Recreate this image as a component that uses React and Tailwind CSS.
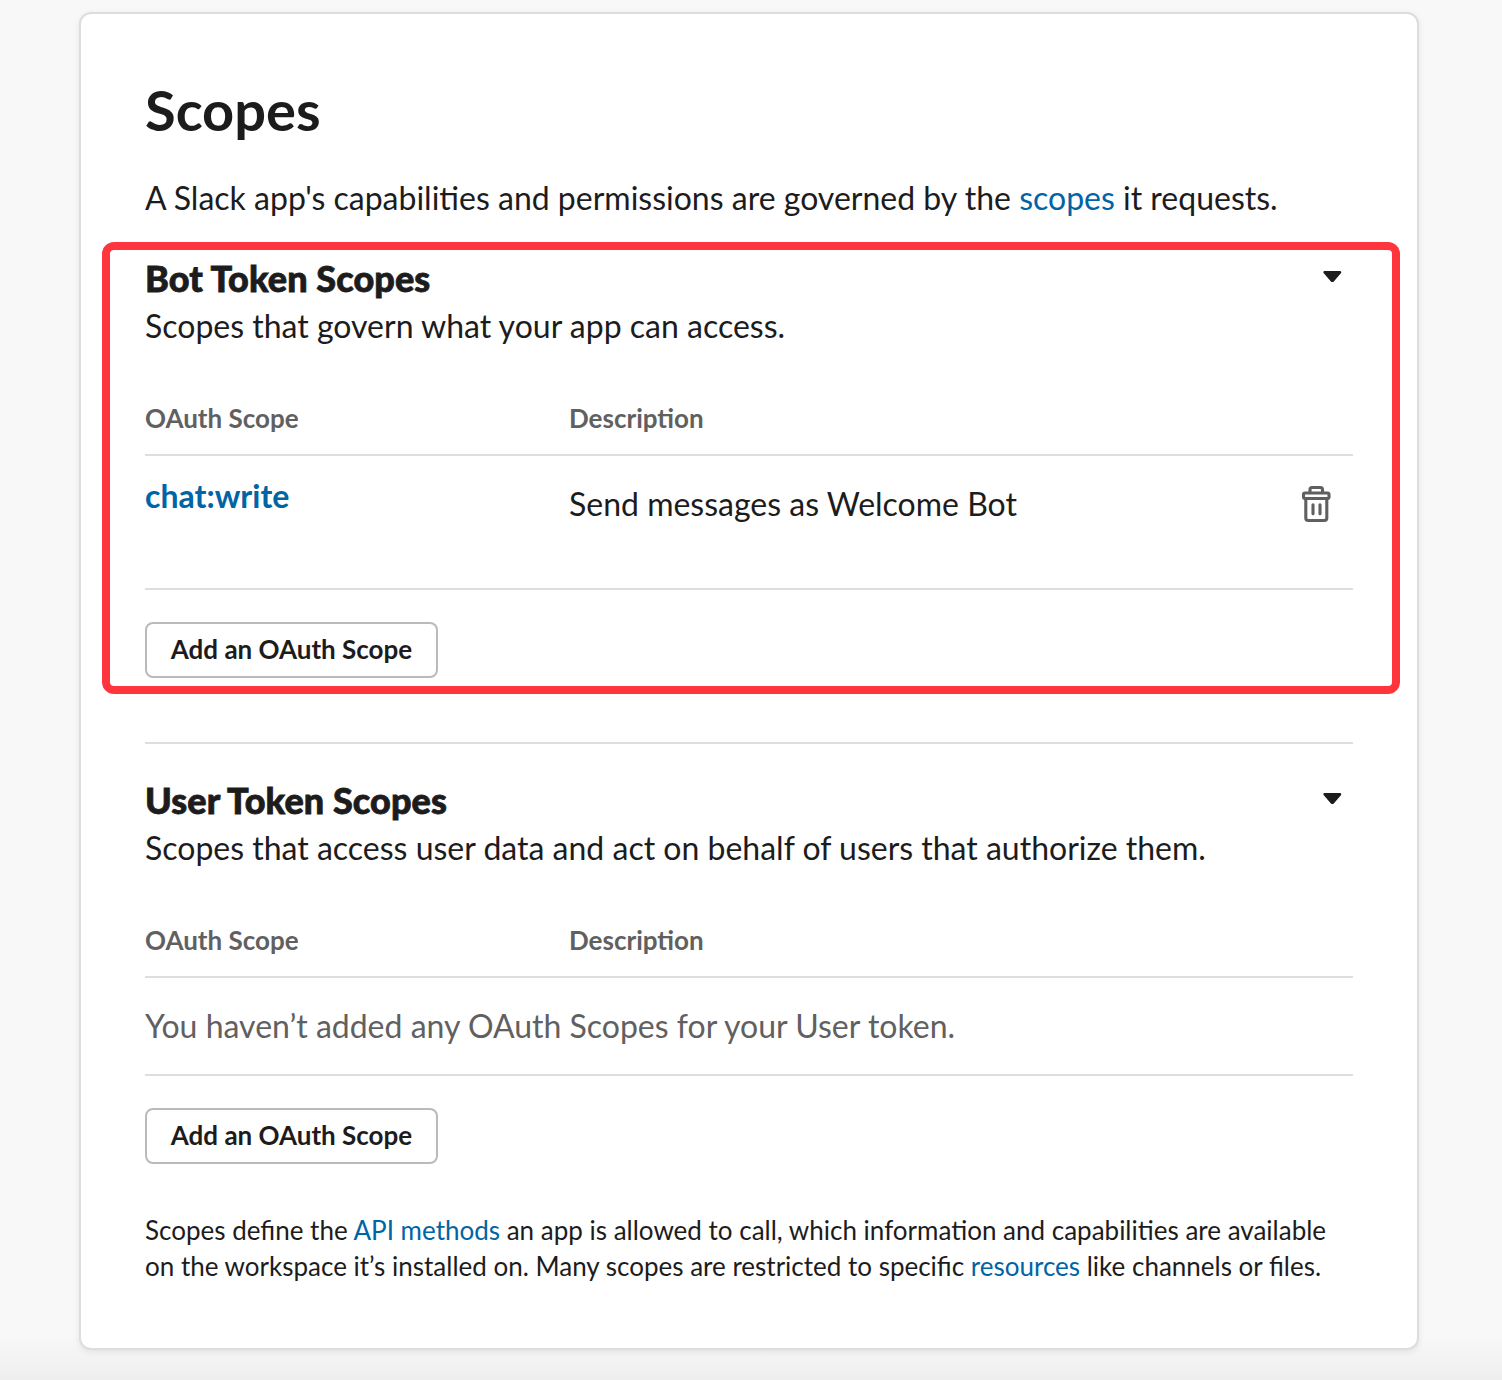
import React from "react";

function Caret() {
  return (
    <svg className="mt-[16px] mr-[11px] h-3 w-[19px] shrink-0" viewBox="0 0 19 12" fill="#1d1c1d">
      <path d="M1.7 0h15.2c1.3 0 1.8 1.3 1 2.2l-7.1 8.2c-0.8 0.9-2.1 0.9-2.9 0l-7.1-8.2c-0.9-0.9-0.3-2.2 0.9-2.2z" />
    </svg>
  );
}

function Trash() {
  return (
    <svg className="h-[38px] w-[30px]" viewBox="0 0 30 38" fill="none" stroke="#616061" strokeWidth="3.1">
      <path d="M9 8V4.5Q9 2.5 11 2.5h8.5q2 0 2 2V8" />
      <rect x="2.5" y="8" width="25.5" height="5.5" rx="1.5" />
      <path d="M4.8 13.5V33q0 2.5 2.5 2.5h16q2.5 0 2.5-2.5V13.5M12 19.8v9M19 19.8v9" strokeLinecap="round" />
    </svg>
  );
}

function SectionHead({ title, text }) {
  return (
    <div className="flex h-[96px] justify-between">
      <div className="-mt-px">
        <h2 className="h-12 text-[36px] leading-[48px] font-black tracking-[0.1px] [-webkit-text-stroke:0.8px_#1d1c1d]">{title}</h2>
        <p className="h-12 text-[32px] leading-[48px]">{text}</p>
      </div>
      <Caret />
    </div>
  );
}

function TableHead() {
  return (
    <div className="mt-[32px] flex h-[73px] items-center border-b-2 border-[#dddddd] text-[26px] font-bold text-[#616061]">
      <div className="w-[424px]">OAuth Scope</div>
      <div>Description</div>
    </div>
  );
}

function AddButton() {
  return (
    <button className="mt-8 block h-14 w-[293px] rounded-[8px] border-2 border-[#bbbabb] bg-white pb-0.5 text-[26px] leading-[50px] font-bold whitespace-nowrap">
      Add an OAuth Scope
    </button>
  );
}

export default function App() {
  return (
    <main className="h-[1380px] w-[1502px] overflow-hidden bg-[#f8f8f8] bg-[linear-gradient(to_bottom,#f8f8f8_1335px,#eeeeee_1380px)] pt-3 pl-[79px] font-['Lato',sans-serif] text-[#1d1c1d]">
      <section className="relative h-[1338px] w-[1340px] rounded-[12px] border-2 border-[#dddddd] bg-white px-16 pt-[60px] shadow-[0_2px_6px_rgba(0,0,0,0.08)] whitespace-nowrap">
        <h1 className="h-[72px] text-[56px] leading-[72px] font-bold">Scopes</h1>
        <p className="mt-[28px] h-12 text-[32px] leading-[48px]">
          A Slack app's capabilities and permissions are governed by the <a className="text-[#0064a5]">scopes</a> it requests.
        </p>
        <div className="mt-[33px] w-[1208px]">
          <SectionHead title="Bot Token Scopes" text="Scopes that govern what your app can access." />
          <TableHead />
          <div className="flex h-[134px] border-b-2 border-[#dddddd] text-[32px] leading-[48px]">
            <a className="mt-[16px] w-[424px] font-bold text-[#0064a5]">chat:write</a>
            <span className="mt-[24px]">Send messages as Welcome Bot</span>
            <span className="mt-[29px] mr-[22px] ml-auto"><Trash /></span>
          </div>
          <AddButton />
          <div className="mt-16 h-0.5 bg-[#dddddd]" />
        </div>
        <div className="mt-[33px] w-[1208px]">
          <SectionHead title="User Token Scopes" text="Scopes that access user data and act on behalf of users that authorize them." />
          <TableHead />
          <p className="h-[98px] border-b-2 border-[#dddddd] pt-[24px] text-[32px] leading-[48px] text-[#616061]">
            You haven’t added any OAuth Scopes for your User token.
          </p>
          <AddButton />
          <p className="mt-[48px] text-[26px] leading-[36px]">
            Scopes define the <a className="text-[#0064a5]">API methods</a> an app is allowed to call, which information and capabilities are available
            <br />
            on the workspace it’s installed on. Many scopes are restricted to specific <a className="text-[#0064a5]">resources</a> like channels or files.
          </p>
        </div>
        <div className="pointer-events-none absolute top-[228px] left-[21px] h-[452px] w-[1298px] rounded-[12px] border-8 border-[#ff353d]" />
      </section>
    </main>
  );
}
